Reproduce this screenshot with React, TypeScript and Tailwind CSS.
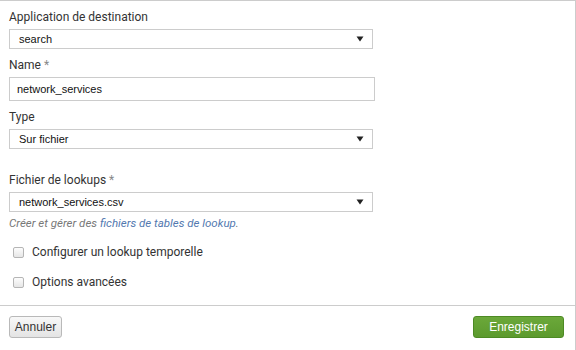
import React from 'react';

const Arrow: React.FC = () => (
  <svg width="8" height="6" viewBox="0 0 8 6" className="shrink-0">
    <path d="M0.5 0.5h7L4 5.5z" fill="#222" />
  </svg>
);

const SelectBox: React.FC<{ value: string }> = ({ value }) => (
  <div className="flex h-[20px] w-[364px] items-center justify-between border border-[#cccccc] bg-white pl-[9px] pr-[8px] font-['Liberation_Sans',Arial,sans-serif] text-[11px] text-[#111]">
    <span>{value}</span>
    <Arrow />
  </div>
);

const Label: React.FC<{ text: string; required?: boolean }> = ({ text, required }) => (
  <div className="h-[16px] font-['Roboto',sans-serif] text-[12px] leading-[16px] text-[#333]">
    {text}
    {required && <span className="ml-[3px] text-[#888]">*</span>}
  </div>
);

const CheckRow: React.FC<{ text: string }> = ({ text }) => (
  <label className="flex h-[16px] items-center gap-[8px] pl-[4px]">
    <span className="h-[11px] w-[11px] rounded-[2px] border border-[#b5b5b5] bg-gradient-to-b from-[#fdfdfd] to-[#e6e6e6]" />
    <span className="font-['Roboto',sans-serif] text-[12px] text-[#333]">{text}</span>
  </label>
);

const App: React.FC = () => {
  return (
    <div className="flex h-[350px] w-[576px] flex-col border-t border-r border-[#cccccc] bg-white">
      <div className="flex flex-col pl-[9px] pt-[8px]">
        <Label text="Application de destination" />
        <div className="mt-[4px]">
          <SelectBox value="search" />
        </div>

        <div className="mt-[8px]">
          <Label text="Name" required />
        </div>
        <div className="mt-[4px] flex h-[24px] w-[366px] items-center border border-[#cccccc] bg-white pl-[7px] font-['Liberation_Sans',Arial,sans-serif] text-[11px] text-[#111]">
          network_services
        </div>

        <div className="mt-[8px]">
          <Label text="Type" />
        </div>
        <div className="mt-[4px]">
          <SelectBox value="Sur fichier" />
        </div>

        <div className="mt-[23px]">
          <Label text="Fichier de lookups" required />
        </div>
        <div className="mt-[4px]">
          <SelectBox value="network_services.csv" />
        </div>
        <div className="mt-[3px] h-[16px] font-['Roboto',sans-serif] text-[11.5px] italic leading-[16px] text-[#777]">
          Créer et gérer des <span className="text-[#5379af]">fichiers de tables de lookup</span>.
        </div>

        <div className="mt-[13px]">
          <CheckRow text="Configurer un lookup temporelle" />
        </div>
        <div className="mt-[14px]">
          <CheckRow text="Options avancées" />
        </div>
      </div>

      <div className="mt-[15px] border-t border-[#cccccc]" />

      <div className="flex items-center justify-between pl-[9px] pr-[11px] pt-[10px]">
        <button className="h-[22px] w-[53px] rounded-[3px] border border-[#b9b9b9] bg-gradient-to-b from-[#f8f8f8] to-[#e4e4e4] font-['Liberation_Sans',Arial,sans-serif] text-[12px] text-[#333]">
          Annuler
        </button>
        <button className="h-[22px] w-[91px] rounded-[3px] border border-[#4d8a24] bg-gradient-to-b from-[#6ba83a] to-[#5c9a2e] font-['Liberation_Sans',Arial,sans-serif] text-[12px] text-white">
          Enregistrer
        </button>
      </div>
    </div>
  );
};

export default App;
